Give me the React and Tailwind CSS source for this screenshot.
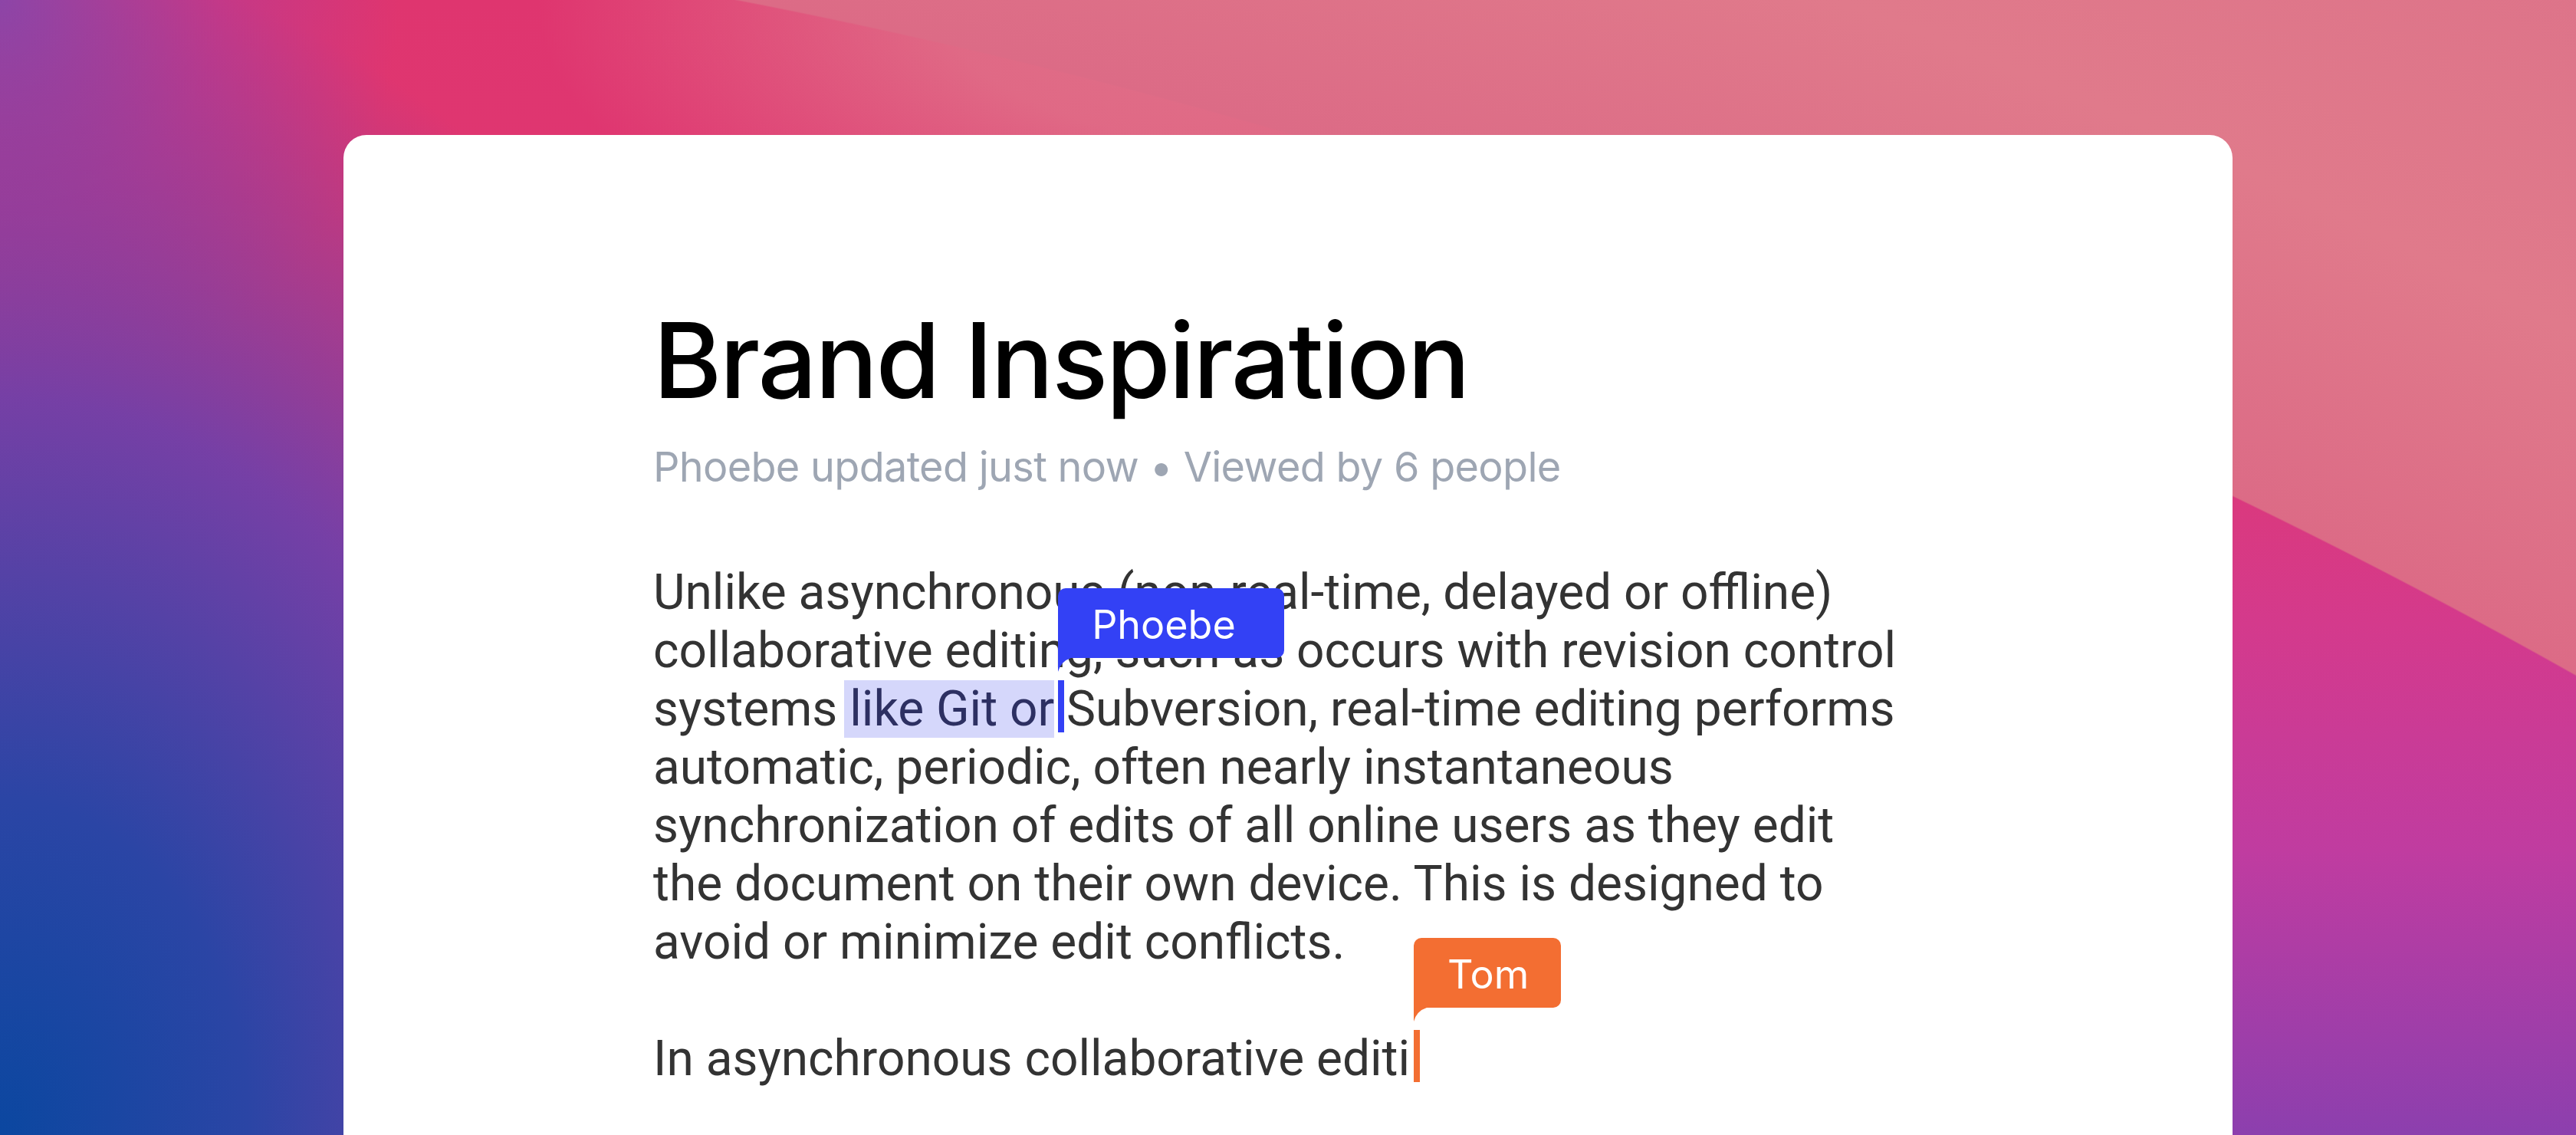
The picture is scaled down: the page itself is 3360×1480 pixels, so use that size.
function Caret({ color, name }) {
  const blue = color === "blue";
  return (
    <span className="relative inline-block h-[76px] w-0 align-top">
      <span className={`absolute left-[5px] top-0 block h-[68px] w-[8px] ${blue ? "bg-[#3341f5]" : "bg-[#f36e32]"}`} />
      <span className="absolute left-[5px] top-[-120px] flex flex-col items-start">
        <span
          className={`block h-[91px] rounded-[10px] rounded-bl-none pl-[44px] pt-[22px] font-['Inter',sans-serif] text-[52px] leading-[52px] text-white ${
            blue ? "w-[295px] bg-[#3341f5]" : "w-[192px] bg-[#f36e32]"
          }`}
        >
          {name}
        </span>
        <svg width="17" height="18" viewBox="0 0 17 18" className="block">
          <path d="M0 0H17Q4 4 0 18Z" fill={blue ? "#3341f5" : "#f36e32"} />
        </svg>
      </span>
    </span>
  );
}

export default function App() {
  return (
    <div className="flex h-[1480px] w-full flex-col overflow-hidden bg-[radial-gradient(circle_7960px_at_-547px_7816px,transparent_7959px,#dc6b86_7961px,#e07a8b_8350px,#dd7389_8800px),radial-gradient(ellipse_950px_420px_at_1650px_0px,#e07289_0%,rgba(224,114,137,0.85)_45%,rgba(222,90,128,0)_100%),radial-gradient(ellipse_1300px_1750px_at_0%_100%,#0b47a0_0%,#2b45a5_25%,rgba(112,64,168,0.95)_55%,rgba(150,60,165,0)_88%),radial-gradient(circle_520px_at_0%_0%,rgba(140,70,170,0.95)_0%,rgba(170,60,160,0.5)_55%,rgba(200,58,150,0)_100%),linear-gradient(180deg,#df356f_0%,#df3873_35%,#d43a8c_55%,#c03ca0_75%,#8c3fae_100%)]">
      <div className="mx-[448px] mt-[176px] flex-1 rounded-t-[30px] bg-white pl-[404px] pt-[226px]">
        <h1 className="font-['Inter',sans-serif] text-[136px] font-medium leading-[136px] tracking-[-0.018em] text-black">
          Brand Inspiration
        </h1>
        <p className="mt-[43px] font-['Inter',sans-serif] text-[54px] leading-[56px] tracking-[-0.013em] text-[#9ea6b3]">
          Phoebe updated just now • Viewed by 6 people
        </p>
        <div className="mt-[98px] whitespace-nowrap font-['Roboto',sans-serif] text-[64px] leading-[76px] text-[#333333]">
          <p>
            Unlike asynchronous (non-real-time, delayed or offline)
            <br />
            collaborative editing, such as occurs with revision control
            <br />
            systems <span className="-ml-[7px] bg-[#d5d7fb] pl-[7px] text-[#2d3062]">like Git or</span>
            <Caret color="blue" name="Phoebe" /> Subversion, real-time editing performs
            <br />
            automatic, periodic, often nearly instantaneous
            <br />
            synchronization of edits of all online users as they edit
            <br />
            the document on their own device. This is designed to
            <br />
            avoid or minimize edit conflicts.
          </p>
          <p className="mt-[76px]">
            In asynchronous collaborative editi
            <Caret color="orange" name="Tom" />
          </p>
        </div>
      </div>
    </div>
  );
}
